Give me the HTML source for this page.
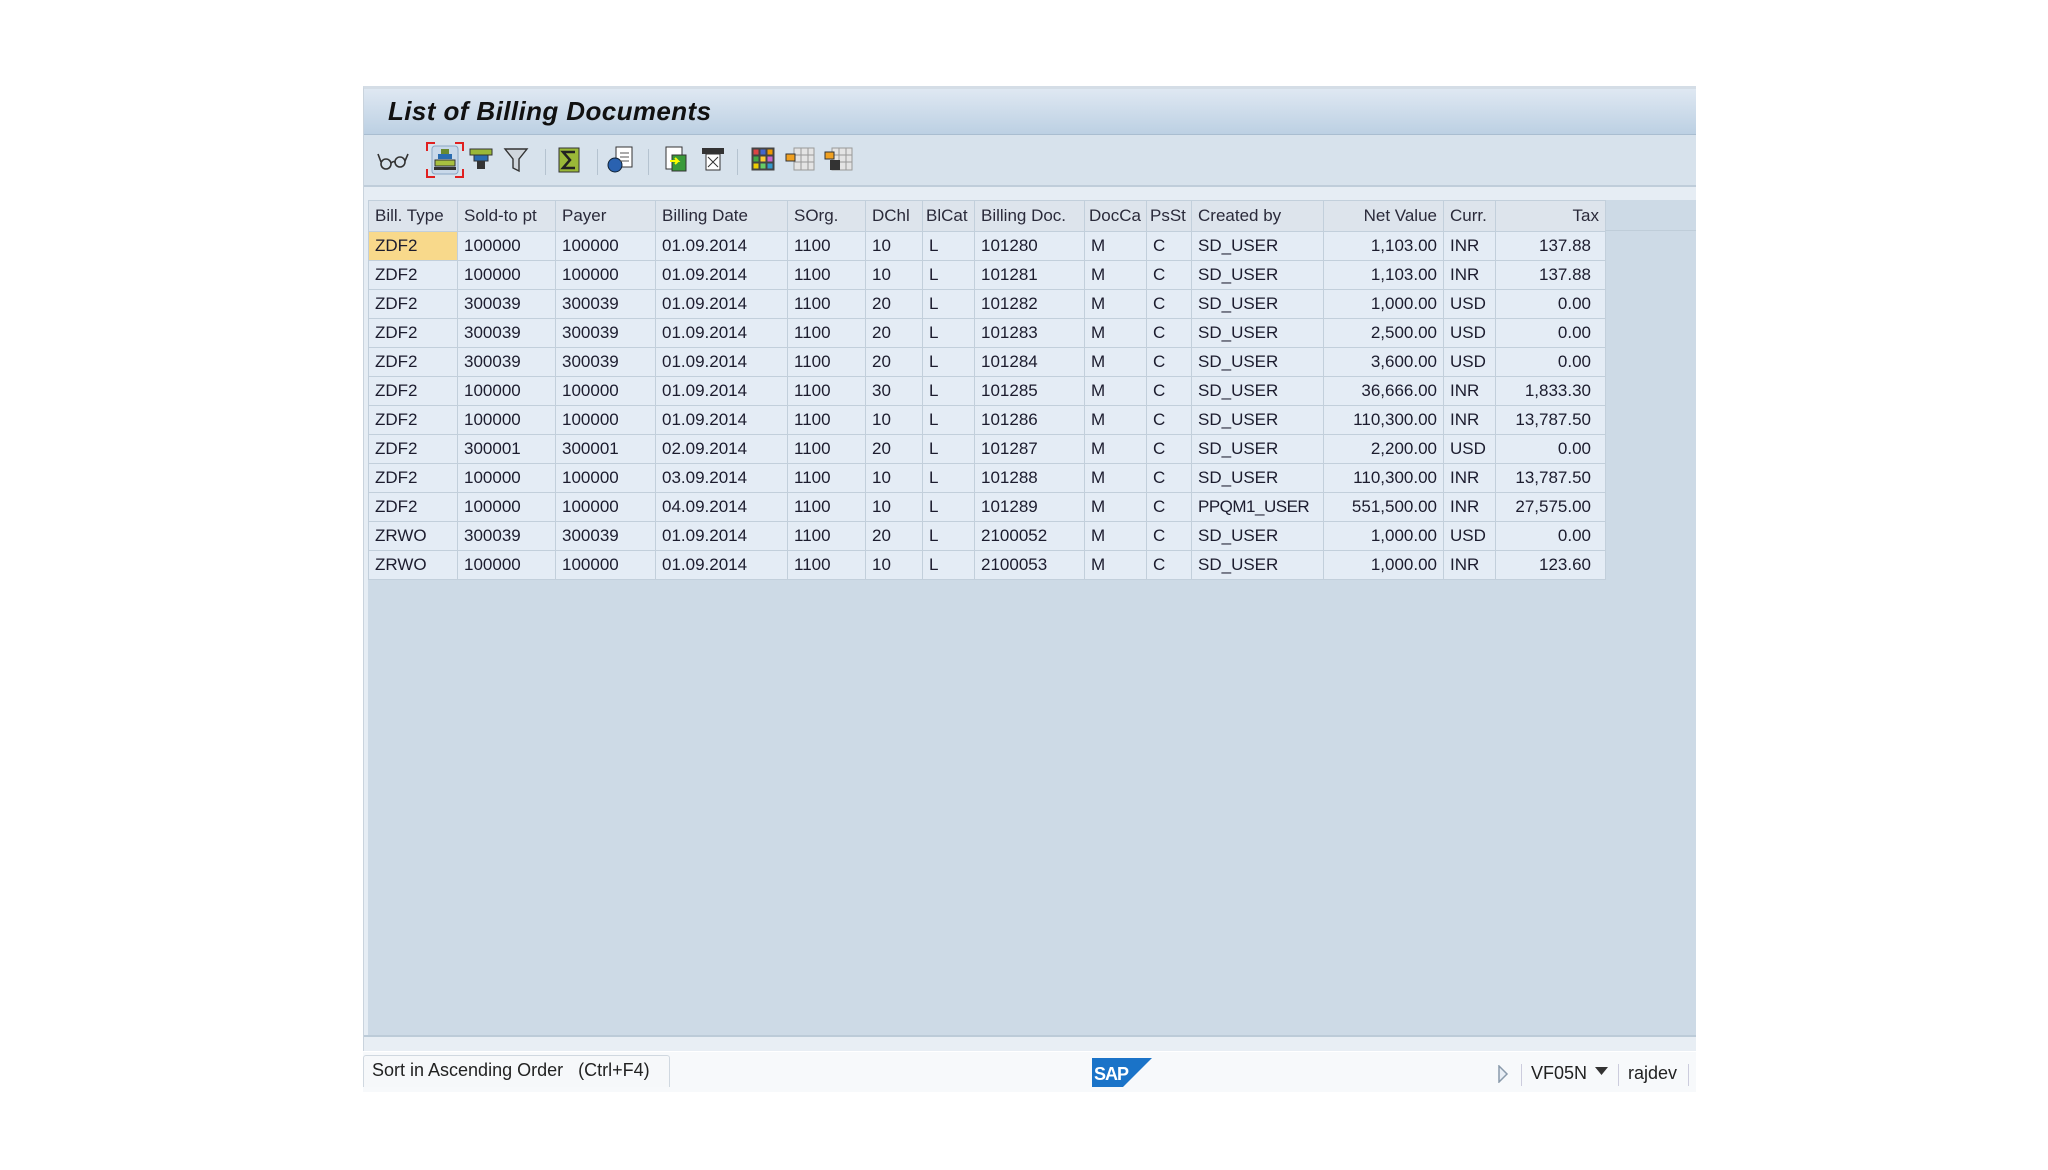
<!DOCTYPE html>
<html><head><meta charset="utf-8"><style>
*{margin:0;padding:0;box-sizing:border-box}
body{width:2048px;height:1170px;background:#fff;position:relative;overflow:hidden;font-family:"Liberation Sans",sans-serif;color:#1c1c2e}
.a{position:absolute}
.win{left:363px;top:86px;width:1333px;height:965px;background:#e6edf4;border-top:3px solid #d4dde6;border-left:1px solid #c9d3dd}
.title{left:364px;top:89px;width:1332px;height:46px;background:linear-gradient(#dfe8f2,#bcd0e3);border-bottom:1px solid #a9bdd0}
.title span{position:absolute;left:24px;top:7px;font-weight:bold;font-style:italic;font-size:26px;color:#111;letter-spacing:0.4px}
.tb{left:364px;top:135px;width:1332px;height:52px;background:#d7e2ec;border-bottom:2px solid #bfcdda}
.sep{position:absolute;top:14px;width:1px;height:26px;background:#b5c3d0}
.area{left:368px;top:200px;width:1328px;height:835px;background:#cddae6}
.lowline{left:364px;top:1035px;width:1332px;height:16px;background:#e8eef4;border-top:2px solid #bccbd8}
table{position:absolute;left:368px;top:200px;border-collapse:collapse;font-size:17px}
td,th{border:1px solid #c2cfdb;height:29px;padding:0 6px;white-space:nowrap;overflow:hidden;font-weight:normal;text-align:left}
th{background:#dde4ec;height:31px;color:#2a2a3a}
td{background:#e4ecf5}
.r{text-align:right}
.y{background:#f8d98b}
.status{left:363px;top:1052px;width:1333px;height:40px;background:#f7f9fb}
.sort{left:363px;top:1055px;width:307px;height:32px;border:1px solid #d0d8e0;border-bottom:none;border-radius:3px 3px 0 0;background:#f6f8fa;font-size:18px;padding:4px 0 0 8px;color:#222}
.st{font-size:18px;color:#222}
</style></head><body>
<div class="a win"></div>
<div class="a title"><span>List of Billing Documents</span></div>
<div class="a tb">
<svg class="a" style="left:0;top:0" width="500" height="52">
<g fill="none" stroke="#333" stroke-width="1.6"><circle cx="22" cy="29" r="5"/><circle cx="36" cy="27" r="5"/><path d="M27 28q4-3 4 0M17 27l-3-8M41 26l3-7"/></g>
<g fill="none" stroke="#e02020" stroke-width="2"><path d="M63 16v-8h8M91 8h8v8M63 34v8h8M99 34v8h-8"/></g>
<rect x="68" y="11" width="26" height="28" rx="3" fill="#c9d9ea" stroke="#8aa6c4"/>
<rect x="77" y="14" width="8" height="5" fill="#6a8a30"/><rect x="74" y="19" width="14" height="5" fill="#2a6cb0"/><rect x="71" y="25" width="20" height="6" fill="#a8c040" stroke="#333" stroke-width="1"/><rect x="70" y="32" width="22" height="3" fill="#333"/>
<rect x="106" y="14" width="22" height="6" fill="#9ab838" stroke="#333"/><rect x="110" y="20" width="14" height="6" fill="#2a6cb0" stroke="#333"/><rect x="113" y="26" width="8" height="8" fill="#333"/>
<path d="M141 14h22l-8 10v12l-6-3v-9z" fill="#d0d6dc" stroke="#333" stroke-width="1.4"/>
<rect x="195" y="13" width="20" height="24" fill="#9ab838" stroke="#333"/><path d="M211 17h-12l7 8-7 8h12" fill="none" stroke="#222" stroke-width="2.5"/>
<rect x="252" y="12" width="16" height="20" fill="#fff" stroke="#333"/><circle cx="251" cy="30" r="7" fill="#2a62b0" stroke="#123"/><path d="M256 18h9M256 22h9M256 26h9" stroke="#555"/>
<rect x="302" y="12" width="16" height="22" fill="#fff" stroke="#333"/><rect x="308" y="20" width="14" height="16" fill="#3a9a3a" stroke="#333"/><path d="M306 26h8l-3-3M314 26l-3 3" stroke="#ff0" stroke-width="2" fill="none"/>
<rect x="338" y="13" width="22" height="6" fill="#333"/><rect x="342" y="19" width="14" height="16" fill="#fff" stroke="#333"/><path d="M344 22l10 10M354 22l-10 10" stroke="#333"/>
<g stroke="#444"><rect x="388" y="13" width="22" height="22" fill="#fff"/><rect x="389" y="14" width="6" height="6" fill="#d44"/><rect x="396" y="14" width="6" height="6" fill="#46c"/><rect x="403" y="14" width="6" height="6" fill="#e90"/><rect x="389" y="21" width="6" height="6" fill="#4a4"/><rect x="396" y="21" width="6" height="6" fill="#fc3"/><rect x="403" y="21" width="6" height="6" fill="#c6c"/><rect x="389" y="28" width="6" height="6" fill="#ec0"/><rect x="396" y="28" width="6" height="6" fill="#6c6"/><rect x="403" y="28" width="6" height="6" fill="#39c"/></g>
<g stroke="#999" fill="#e4e4e4"><rect x="430" y="13" width="20" height="22"/><path d="M430 20h20M430 27h20M437 13v22M444 13v22"/></g><rect x="422" y="19" width="9" height="7" fill="#f0a020" stroke="#333"/>
<g stroke="#999" fill="#e4e4e4"><rect x="468" y="13" width="20" height="22"/><path d="M468 20h20M468 27h20M475 13v22M482 13v22"/></g><rect x="461" y="17" width="9" height="7" fill="#f0a020" stroke="#333"/><rect x="466" y="25" width="10" height="10" fill="#333"/>
</svg>
<div class="sep" style="left:181px"></div><div class="sep" style="left:233px"></div><div class="sep" style="left:284px"></div><div class="sep" style="left:373px"></div>
</div>
<div class="a area"></div>
<table>
<tr><th style="width:89px">Bill. Type</th><th style="width:98px">Sold-to pt</th><th style="width:100px">Payer</th><th style="width:132px">Billing Date</th><th style="width:78px">SOrg.</th><th style="width:57px">DChl</th><th style="width:52px;padding:0 3px">BlCat</th><th style="width:110px">Billing Doc.</th><th style="width:62px;padding:0 4px">DocCa</th><th style="width:45px;padding:0 3px">PsSt</th><th style="width:132px">Created by</th><th class="r" style="width:120px">Net Value</th><th style="width:52px">Curr.</th><th class="r" style="width:110px">Tax</th></tr>
<tr><td class="y">ZDF2</td><td>100000</td><td>100000</td><td>01.09.2014</td><td>1100</td><td>10</td><td>L</td><td>101280</td><td>M</td><td>C</td><td>SD_USER</td><td class="r">1,103.00</td><td>INR</td><td class="r" style="padding-right:14px">137.88</td></tr>
<tr><td>ZDF2</td><td>100000</td><td>100000</td><td>01.09.2014</td><td>1100</td><td>10</td><td>L</td><td>101281</td><td>M</td><td>C</td><td>SD_USER</td><td class="r">1,103.00</td><td>INR</td><td class="r" style="padding-right:14px">137.88</td></tr>
<tr><td>ZDF2</td><td>300039</td><td>300039</td><td>01.09.2014</td><td>1100</td><td>20</td><td>L</td><td>101282</td><td>M</td><td>C</td><td>SD_USER</td><td class="r">1,000.00</td><td>USD</td><td class="r" style="padding-right:14px">0.00</td></tr>
<tr><td>ZDF2</td><td>300039</td><td>300039</td><td>01.09.2014</td><td>1100</td><td>20</td><td>L</td><td>101283</td><td>M</td><td>C</td><td>SD_USER</td><td class="r">2,500.00</td><td>USD</td><td class="r" style="padding-right:14px">0.00</td></tr>
<tr><td>ZDF2</td><td>300039</td><td>300039</td><td>01.09.2014</td><td>1100</td><td>20</td><td>L</td><td>101284</td><td>M</td><td>C</td><td>SD_USER</td><td class="r">3,600.00</td><td>USD</td><td class="r" style="padding-right:14px">0.00</td></tr>
<tr><td>ZDF2</td><td>100000</td><td>100000</td><td>01.09.2014</td><td>1100</td><td>30</td><td>L</td><td>101285</td><td>M</td><td>C</td><td>SD_USER</td><td class="r">36,666.00</td><td>INR</td><td class="r" style="padding-right:14px">1,833.30</td></tr>
<tr><td>ZDF2</td><td>100000</td><td>100000</td><td>01.09.2014</td><td>1100</td><td>10</td><td>L</td><td>101286</td><td>M</td><td>C</td><td>SD_USER</td><td class="r">110,300.00</td><td>INR</td><td class="r" style="padding-right:14px">13,787.50</td></tr>
<tr><td>ZDF2</td><td>300001</td><td>300001</td><td>02.09.2014</td><td>1100</td><td>20</td><td>L</td><td>101287</td><td>M</td><td>C</td><td>SD_USER</td><td class="r">2,200.00</td><td>USD</td><td class="r" style="padding-right:14px">0.00</td></tr>
<tr><td>ZDF2</td><td>100000</td><td>100000</td><td>03.09.2014</td><td>1100</td><td>10</td><td>L</td><td>101288</td><td>M</td><td>C</td><td>SD_USER</td><td class="r">110,300.00</td><td>INR</td><td class="r" style="padding-right:14px">13,787.50</td></tr>
<tr><td>ZDF2</td><td>100000</td><td>100000</td><td>04.09.2014</td><td>1100</td><td>10</td><td>L</td><td>101289</td><td>M</td><td>C</td><td style="letter-spacing:-0.5px">PPQM1_USER</td><td class="r">551,500.00</td><td>INR</td><td class="r" style="padding-right:14px">27,575.00</td></tr>
<tr><td>ZRWO</td><td>300039</td><td>300039</td><td>01.09.2014</td><td>1100</td><td>20</td><td>L</td><td>2100052</td><td>M</td><td>C</td><td>SD_USER</td><td class="r">1,000.00</td><td>USD</td><td class="r" style="padding-right:14px">0.00</td></tr>
<tr><td>ZRWO</td><td>100000</td><td>100000</td><td>01.09.2014</td><td>1100</td><td>10</td><td>L</td><td>2100053</td><td>M</td><td>C</td><td>SD_USER</td><td class="r">1,000.00</td><td>INR</td><td class="r" style="padding-right:14px">123.60</td></tr>
</table>
<div class="a" style="left:1605px;top:230px;width:91px;height:1px;background:#bfcdd9"></div>
<div class="a lowline"></div>
<div class="a status"></div>
<div class="a sort">Sort in Ascending Order&nbsp;&nbsp;&nbsp;(Ctrl+F4)</div>
<svg class="a" style="left:1092px;top:1058px" width="60" height="29"><path d="M0 0h60L31 29H0z" fill="#1a73c8"/><text x="2" y="22" font-family="Liberation Sans" font-weight="bold" font-size="18" fill="#fff" letter-spacing="-1">SAP</text></svg>
<svg class="a" style="left:1497px;top:1065px" width="12" height="18"><path d="M2 1l8 8-8 8z" fill="#e8eef5" stroke="#8a9aab" stroke-width="1.5"/></svg>
<div class="a" style="left:1521px;top:1064px;width:1px;height:22px;background:#ccd"></div>
<div class="a st" style="left:1531px;top:1063px">VF05N</div>
<svg class="a" style="left:1595px;top:1067px" width="13" height="9"><path d="M0 0h13L6.5 8z" fill="#333"/></svg>
<div class="a" style="left:1618px;top:1064px;width:1px;height:22px;background:#ccd"></div>
<div class="a st" style="left:1628px;top:1063px">rajdev</div>
<div class="a" style="left:1688px;top:1064px;width:1px;height:22px;background:#ccd"></div>
</body></html>
